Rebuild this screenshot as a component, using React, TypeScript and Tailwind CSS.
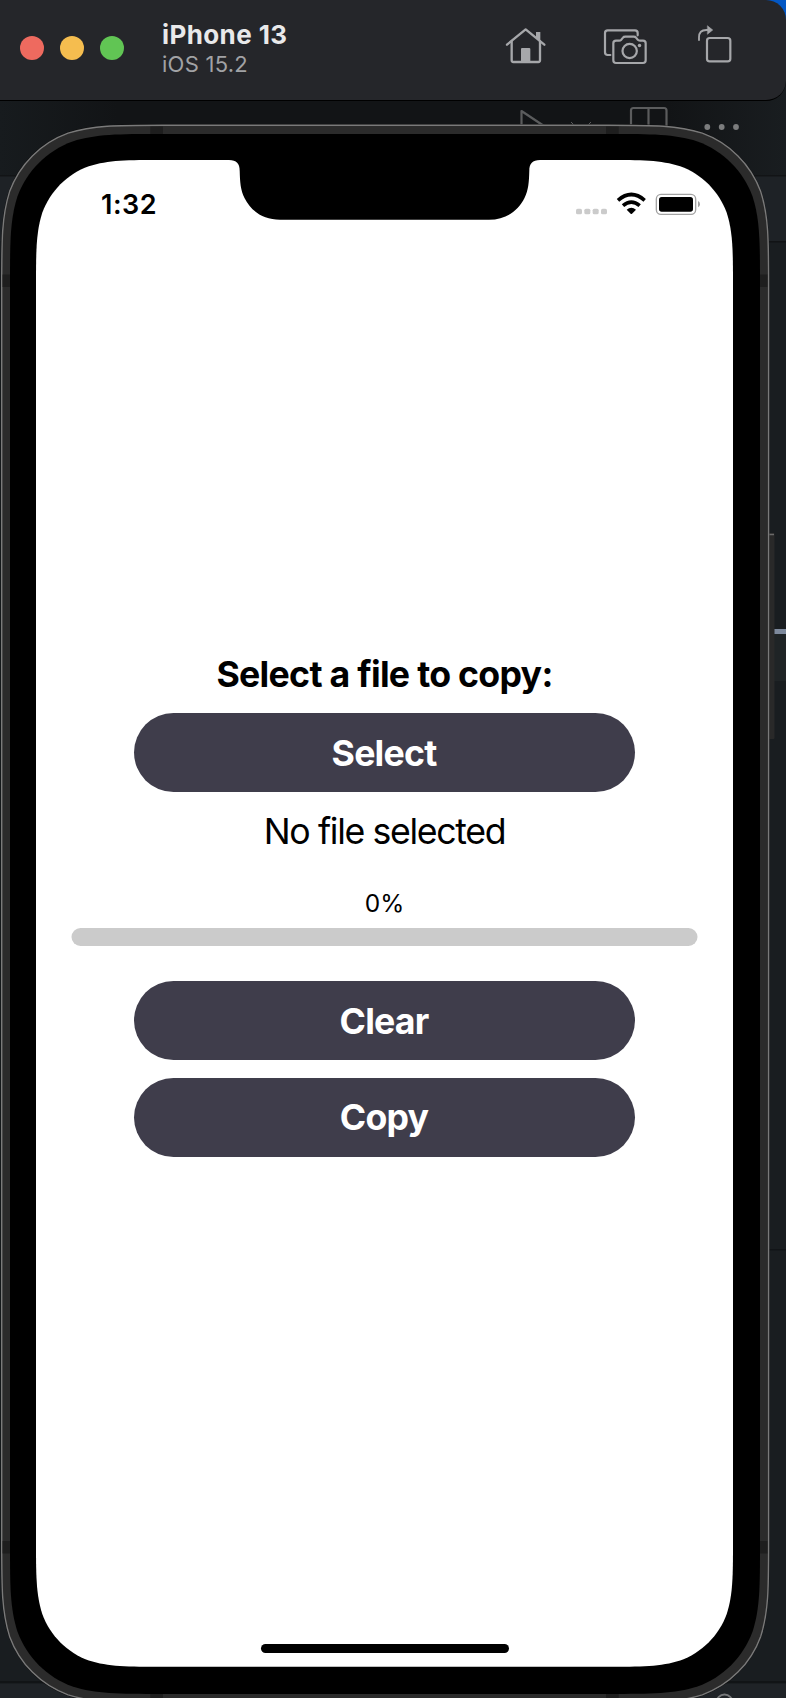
import React from "react";

// Rounded rectangle with continuous-curvature corners.
function squircle(x: number, y: number, w: number, h: number, r: number) {
  const a = 1.528665 * r, b = 1.088493 * r, c = 0.868407 * r, d = 0.631494 * r;
  const e = 0.074911 * r, f = 0.372824 * r, g = 0.16906 * r;
  const X = x + w, Y = y + h;
  return [
    `M${x + a},${y}H${X - a}`,
    `C${X - b},${y} ${X - c},${y} ${X - d},${y + e}`,
    `C${X - f},${y + g} ${X - g},${y + f} ${X - e},${y + d}`,
    `C${X},${y + c} ${X},${y + b} ${X},${y + a}V${Y - a}`,
    `C${X},${Y - b} ${X},${Y - c} ${X - e},${Y - d}`,
    `C${X - g},${Y - f} ${X - f},${Y - g} ${X - d},${Y - e}`,
    `C${X - c},${Y} ${X - b},${Y} ${X - a},${Y}H${x + a}`,
    `C${x + b},${Y} ${x + c},${Y} ${x + d},${Y - e}`,
    `C${x + f},${Y - g} ${x + g},${Y - f} ${x + e},${Y - d}`,
    `C${x},${Y - c} ${x},${Y - b} ${x},${Y - a}V${y + a}`,
    `C${x},${y + b} ${x},${y + c} ${x + e},${y + d}`,
    `C${x + g},${y + f} ${x + f},${y + g} ${x + d},${y + e}`,
    `C${x + c},${y} ${x + b},${y} ${x + a},${y}Z`,
  ].join("");
}

function Backdrop() {
  return (
    <svg className="absolute inset-0" width="786" height="1698" viewBox="0 0 786 1698" aria-hidden="true">
      <defs>
        <linearGradient id="shade" x1="0" y1="0" x2="1" y2="0">
          <stop offset="0" stopColor="#171b1e" />
          <stop offset="0.15" stopColor="#121416" />
          <stop offset="0.85" stopColor="#121416" />
          <stop offset="1" stopColor="#191d20" />
        </linearGradient>
      </defs>
      <rect width="786" height="1698" fill="#191d20" />
      <rect y="80" width="786" height="96" fill="url(#shade)" />
      <rect y="176" width="786" height="65" fill="#1e2226" />
      <rect y="175" width="786" height="1.5" fill="#121416" />
      <rect x="760" y="241" width="26" height="1.5" fill="#111315" />
      <rect x="760" y="634" width="26" height="47" fill="#1f2426" />
      <rect x="760" y="1249" width="26" height="1.5" fill="#111417" />
      <rect y="1681" width="786" height="2.5" fill="#111416" />
      <rect y="1683.5" width="786" height="15" fill="#1f2327" />
      <rect x="774" y="629" width="12" height="5" fill="#7d899c" />
      <circle cx="724.5" cy="1702.5" r="8" fill="none" stroke="#77797b" strokeWidth="2" />
      <g fill="none" stroke="#5b5c5d" strokeWidth="2.2" strokeLinejoin="round">
        <path d="M521.5 130V111L544 126" />
        <path d="M571 122l4 4M591 122l-4 4" strokeWidth="1" />
        <rect x="631" y="108" width="35.5" height="34" rx="2.5" />
        <path d="M648.5 108v30" />
      </g>
      <g fill="#7b7c7d">
        <circle cx="707.3" cy="127" r="2.9" />
        <circle cx="721.7" cy="127" r="2.9" />
        <circle cx="736" cy="127" r="2.9" />
      </g>
    </svg>
  );
}

function DeviceFrame() {
  return (
    <svg className="absolute inset-0" width="786" height="1698" viewBox="0 0 786 1698" aria-hidden="true">
      <rect x="768" y="533" width="6.5" height="206" rx="1" fill="#292929" />
      <path d="M769 534.5h5" stroke="#6a6a6a" strokeWidth="1.5" />
      <path d={squircle(0.8, 124.3, 768.6, 1579.5, 106)} fill="#0b0b0b" />
      <path d={squircle(1.7, 125.3, 766.9, 1577.4, 105)} fill="#2b2b2b" stroke="#7a7a7a" strokeWidth="1.4" />
      <g fill="#1e1e1e">
        <rect x="150.3" y="126.5" width="12.7" height="8" />
        <rect x="606" y="126.5" width="12.7" height="8" />
        <rect x="150.3" y="1694" width="12.7" height="6" />
        <rect x="606" y="1694" width="12.7" height="6" />
        <rect x="2.6" y="274.5" width="7.4" height="12.5" />
        <rect x="760" y="274.5" width="7.4" height="12.5" />
        <rect x="2.6" y="1541" width="7.4" height="12.5" />
        <rect x="760" y="1541" width="7.4" height="12.5" />
      </g>
      <path d={squircle(10, 134, 750, 1560, 99)} fill="#000" />
      <path d={squircle(36, 160, 697, 1506.7, 83.6)} fill="#fff" />
      <path
        d="M229 159V160C236.5 160 239.7 163.5 239.7 171C240 182 240.5 190 244.5 198C251 211 263 219.7 280 219.7H489C506 219.7 518 211 524.5 198C528.5 190 529 182 529.3 171C529.3 163.5 532.5 160 540 160V159Z"
        fill="#000"
      />
    </svg>
  );
}

function HomeIcon() {
  return (
    <svg width="41" height="42" viewBox="75 69 123 126" fill="none" stroke="#a6a7aa" strokeWidth="7" strokeLinejoin="round" strokeLinecap="round">
      <path d="M81 134L137 88L193 134" />
      <path d="M95 124V181Q95 186 100 186H175Q180 186 180 181V124" />
      <path d="M168 96H181V124L168 113Z" fill="#a6a7aa" stroke="none" />
      <path d="M123 147Q123 144 126 144H148Q151 144 151 147V186H123Z" fill="#a6a7aa" stroke="none" />
    </svg>
  );
}

function CameraIcon() {
  return (
    <svg width="47" height="42" viewBox="366 69 141 126" fill="none" stroke="#a6a7aa" strokeWidth="6.6" strokeLinejoin="round" strokeLinecap="round">
      <path d="M391 165H383Q375 165 375 157V99Q375 91 383 91H465Q473 91 473 99V106" />
      <path d="M408 122H417Q421 122 424 119L429 113Q431 110 436 110H461Q466 110 468 113L473 119Q475 122 480 122H489Q497 122 497 130V181Q497 189 489 189H408Q400 189 400 181V130Q400 122 408 122Z" />
      <circle cx="449" cy="153" r="21.5" />
      <circle cx="478.5" cy="136.5" r="5.2" fill="#a6a7aa" stroke="none" />
    </svg>
  );
}

function RotateIcon() {
  return (
    <svg width="37" height="42" viewBox="648 69 111 126" fill="none" stroke="#a6a7aa" strokeWidth="6.6" strokeLinejoin="round" strokeLinecap="round">
      <rect x="681" y="114" width="70" height="70" rx="8" />
      <path d="M657 120V112Q657 90 679 90H683" strokeWidth="5.5" />
      <path d="M683 78L698 90L683 102Z" fill="#a6a7aa" strokeWidth="2" />
    </svg>
  );
}

function TitleBar() {
  return (
    <header className="relative h-[101px] w-full">
      <div className="absolute right-0 top-0 size-5 bg-[#0357c4]" />
      <div className="relative flex h-[101px] w-full items-start rounded-r-[20px] border-b border-black bg-[#25262a] pl-5">
        <div className="mt-9 flex gap-4">
          <span className="size-6 rounded-full bg-[#ee6a5f]" />
          <span className="size-6 rounded-full bg-[#f5bd4f]" />
          <span className="size-6 rounded-full bg-[#61c554]" />
        </div>
        <div className="ml-[38px] mt-[18px] w-[343px]">
          <div className="text-[26px] font-bold leading-[34px] tracking-[0.4px] text-[#e9e9ea]">iPhone 13</div>
          <div className="text-[22px] leading-[24px] tracking-[0.25px] text-[#a1a2a5]">iOS 15.2</div>
        </div>
        <div className="mt-[23px] flex">
          <HomeIcon />
          <div className="ml-14"><CameraIcon /></div>
          <div className="ml-[47px]"><RotateIcon /></div>
        </div>
      </div>
    </header>
  );
}

function StatusBar() {
  return (
    <div className="flex h-[60px] w-full items-start justify-between pl-[65px] pr-[33px] pt-[28px]">
      <span className="text-[27px] font-semibold leading-[34px] tracking-[0.5px] text-black">1:32</span>
      <svg className="mt-[2px]" width="125" height="26" viewBox="285 270 375 78" aria-hidden="true">
        <g fill="#cbcbcb">
          <rect x="288" y="326" width="18" height="17" rx="5" />
          <rect x="313" y="326" width="18" height="17" rx="5" />
          <rect x="338" y="326" width="18" height="17" rx="5" />
          <rect x="363" y="326" width="18" height="17" rx="5" />
        </g>
        <g fill="none" stroke="#000" strokeWidth="11">
          <path d="M414 301Q454 266 494 301" />
          <path d="M429 317Q454 296 479 317" />
        </g>
        <path d="M440 329Q454 317 468 329L456 341Q454 343 452 341Z" />
        <rect x="529" y="283" width="118" height="60" rx="14" fill="none" stroke="#a3a3a3" strokeWidth="4" />
        <rect x="537" y="291" width="102" height="44" rx="8" />
        <path d="M654 303Q660 306 660 313Q660 319 654 322Z" fill="#a3a3a3" />
      </svg>
    </div>
  );
}

function PillButton({ label }: { label: string }) {
  return (
    <button className="flex h-[79px] w-[501px] shrink-0 items-center justify-center rounded-full bg-[#3f3d4b] pr-px text-[35.7px] font-bold leading-[44px] tracking-[-0.8px] text-white">
      {label}
    </button>
  );
}

export default function App() {
  return (
    <div className="relative h-[1698px] w-[786px] overflow-hidden bg-[#191d20] font-['Inter','Liberation_Sans',sans-serif]">
      <Backdrop />
      <TitleBar />
      <DeviceFrame />
      <div className="relative ml-9 mt-[59px] flex h-[1507px] w-[697px] flex-col items-center">
        <StatusBar />
        <main className="flex w-full flex-1 flex-col items-center pt-[432px] text-black">
          <h1 className="whitespace-nowrap text-[35.7px] font-bold leading-[44px] tracking-[-0.72px]">Select a file to copy:</h1>
          <div className="mt-[17px]"><PillButton label="Select" /></div>
          <p className="mt-[17px] whitespace-nowrap text-[35.7px] leading-[44px] tracking-[-1.35px]">No file selected</p>
          <p className="mt-[34.5px] text-[24.5px] leading-[30px]">0%</p>
          <div className="mt-[10px] h-[18px] w-[626px] -translate-x-[0.5px] rounded-full bg-[#cbcbcb]" />
          <div className="mt-[35.7px] flex flex-col gap-[17.5px]">
            <PillButton label="Clear" />
            <PillButton label="Copy" />
          </div>
        </main>
        <div className="mb-[14px] h-[9px] w-[248px] rounded-full bg-black" />
      </div>
    </div>
  );
}
